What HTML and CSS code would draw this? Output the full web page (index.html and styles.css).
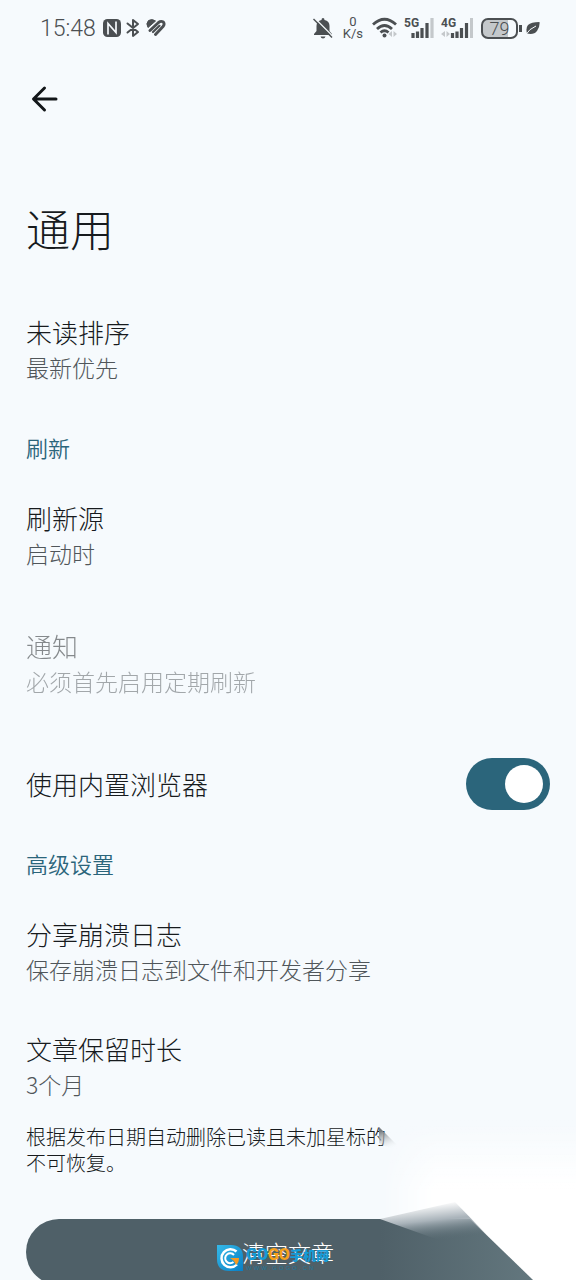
FILE: index.html
```html
<!DOCTYPE html>
<html lang="zh-CN">
<head>
<meta charset="utf-8">
<meta name="viewport" content="width=device-width, initial-scale=1">
<title>通用</title>
<link rel="stylesheet" href="styles.css">
</head>
<body>
<div class="screen">
  <header class="status">
    <div class="status-group">
      <time class="clock">15:48</time>
      <svg class="icon" width="20" height="20" viewBox="0 0 20 20" aria-hidden="true">
        <rect x="1" y="1" width="18" height="18" rx="4.500" fill="#4b4f52"/>
        <path d="M6 16.500V5.500L14 14.500V3.500" fill="none" stroke="#f6fafd" stroke-width="1.700"/>
      </svg>
      <svg class="icon" width="14" height="20" viewBox="0 0 14 20" fill="none" stroke="#4b4f52" stroke-width="2" stroke-linejoin="round" stroke-linecap="round" aria-hidden="true">
        <path d="M1.500 5.500L12 14L7 18V2L12 6L1.500 14.500"/>
      </svg>
      <svg class="icon heart" width="20" height="18" viewBox="0 0 20 18" aria-hidden="true">
        <path d="M2 8.500L9.500 2Q6 -.5 2.500 1.500Q-.5 4.500 2 8.500Z" fill="#4b4f52" stroke="#4b4f52" stroke-linejoin="round"/>
        <path d="M4 11.500L12.500 3.500Q15 1.500 17.300 3Q19 5 17 7.500L9.500 15.500" fill="none" stroke="#4b4f52" stroke-width="2.900" stroke-linecap="round"/>
        <path d="M7 13L13.500 6.800" stroke="#4b4f52" stroke-width="2.200" stroke-linecap="round"/>
      </svg>
    </div>
    <div class="status-group status-right">
      <svg class="icon" width="22" height="24" viewBox="0 0 22 24" aria-hidden="true">
        <path d="M11 2Q12.500 2 12.500 4Q17.500 5 17.500 10V15L20 18V19H2V18L4.500 15V10Q4.500 5 9.500 4Q9.500 2 11 2ZM8.500 20.500H13.500Q13 22.500 11 22.500Q9 22.500 8.500 20.500Z" fill="#4b4f52"/>
        <path d="M2.500 2L21 20.500" stroke="#f6fafd" stroke-width="1.500"/>
        <path d="M1.500 3L20 21.500" stroke="#4b4f52" stroke-width="1.500"/>
      </svg>
      <div class="speed"><span>0</span><span>K/s</span></div>
      <svg class="icon" width="25" height="22" viewBox="0 0 25 22" aria-hidden="true">
        <g fill="none" stroke="#4b4f52" stroke-width="2.800"><path d="M1 7.500Q12.500 -3 24 7.500"/><path d="M5 12Q12.500 5 20 12"/><path d="M8.500 15.500Q12.500 12 16.500 15.500"/></g>
        <circle cx="12.500" cy="18.500" r="2" fill="#4b4f52"/>
        <path d="M20 14V20L16.500 17ZM21.500 14V20L25 17Z" fill="#c4c8cb"/>
      </svg>
      <div class="signal">
        <span class="net">5G</span>
        <svg width="30" height="22" viewBox="0 0 30 22" aria-hidden="true">
          <path d="M9 21V16M13.500 21V14.500M18 21V11M23 21V6" stroke="#4b4f52" stroke-width="3.200"/>
          <path d="M28 21V1" stroke="#c4c8cb" stroke-width="3.200"/>
        </svg>
      </div>
      <div class="signal">
        <span class="net">4G</span>
        <svg width="32" height="22" viewBox="0 0 32 22" aria-hidden="true">
          <path d="M4 14V20L0 17ZM5.500 14V20L9 17Z" fill="#c4c8cb"/>
          <path d="M11.500 21V16M16 21V14.500M20.500 21V11M25.500 21V6" stroke="#4b4f52" stroke-width="3.200"/>
          <path d="M30.500 21V1" stroke="#c4c8cb" stroke-width="3"/>
        </svg>
      </div>
      <div class="battery"><span>79</span></div>
      <svg class="icon" width="14" height="14" viewBox="0 0 14 14" aria-hidden="true">
        <path d="M13.500 1Q5 1 2 4Q-.5 7 1 12.500Q8 14 11 10Q14 6 13.500 1Z" fill="#4b4f52"/>
        <path d="M0 13.500Q3 8 10 5" fill="none" stroke="#f6fafd" stroke-width="1"/>
      </svg>
    </div>
  </header>

  <button class="back" type="button" aria-label="返回">
    <svg width="28" height="28" viewBox="0 0 28 28" fill="none" stroke="#121619" stroke-width="3" stroke-linecap="round" stroke-linejoin="round" aria-hidden="true">
      <path d="M25 14H3M13.500 3L2.500 14L13.500 25"/>
    </svg>
  </button>

  <main class="content">
    <h1 class="heading">通用</h1>
    <section class="group">
      <div class="item"><h3 class="title">未读排序</h3><p class="sub">最新优先</p></div>
    </section>
    <section class="group">
      <h2 class="section">刷新</h2>
      <div class="item"><h3 class="title">刷新源</h3><p class="sub">启动时</p></div>
      <div class="item disabled"><h3 class="title">通知</h3><p class="sub">必须首先启用定期刷新</p></div>
      <div class="item row">
        <label class="title" for="browser">使用内置浏览器</label>
        <input class="switch" id="browser" type="checkbox" role="switch" checked>
      </div>
    </section>
    <section class="group advanced">
      <h2 class="section">高级设置</h2>
      <div class="item"><h3 class="title">分享崩溃日志</h3><p class="sub">保存崩溃日志到文件和开发者分享</p></div>
      <div class="item"><h3 class="title">文章保留时长</h3><p class="sub">3个月</p></div>
      <p class="note">根据发布日期自动删除已读且未加星标的<br>不可恢复。</p>
      <button class="clear" type="button">清空文章</button>
    </section>
  </main>

  <svg class="veil" width="200" height="180" viewBox="0 0 200 180" aria-hidden="true">
    <defs>
      <linearGradient id="haze" x1="0" y1="0" x2="0" y2="1"><stop offset="0" stop-color="#fff" stop-opacity="0"/><stop offset="1" stop-color="#fff"/></linearGradient>
      <linearGradient id="side" gradientUnits="userSpaceOnUse" x1="4" y1="0" x2="60" y2="0"><stop offset="0" stop-color="#000"/><stop offset="1" stop-color="#fff"/></linearGradient>
      <mask id="fade" maskUnits="userSpaceOnUse" x="0" y="0" width="200" height="180"><rect width="200" height="180" fill="url(#side)"/></mask>
      <linearGradient id="tint" x1="0" y1="0" x2="1" y2="0"><stop offset="0" stop-color="#63777e" stop-opacity="0"/><stop offset="1" stop-color="#63777e"/></linearGradient>
      <linearGradient id="edge" gradientUnits="userSpaceOnUse" x1="70" y1="102" x2="74" y2="139"><stop offset="0" stop-color="#fff"/><stop offset="0.450" stop-color="#a9b3ba"/><stop offset="1" stop-color="#5a6c74" stop-opacity="0"/></linearGradient>
      <linearGradient id="smear" x1="0" y1="0.200" x2="0.300" y2="1"><stop offset="0" stop-color="#777d82"/><stop offset="1" stop-color="#f9fcfe" stop-opacity="0"/></linearGradient>
    </defs>
    <path d="M4 119H94L157 180H4Z" fill="#4f6068"/>
    <path d="M4 119H94L157 180H4Z" fill="url(#tint)"/>
    <path d="M94 90H200V180H157L94 119Z" fill="#fff"/>
    <g mask="url(#fade)">
      <rect x="4" y="20" width="196" height="70" fill="url(#haze)"/>
      <path d="M4 90H200V119H4Z" fill="#fff"/>
    </g>
    <path d="M4 119L79 102L115 139H60Z" fill="url(#edge)"/>
    <path d="M3 27L27 51Q10 48 3 43Z" fill="url(#smear)"/>
  </svg>

  <div class="watermark">
    <svg width="26" height="26" viewBox="0 0 26 26" aria-hidden="true">
      <defs><linearGradient id="logo" x1="0" y1="0" x2="1" y2="1"><stop offset="0" stop-color="#35b9e8"/><stop offset="1" stop-color="#087fc6"/></linearGradient></defs>
      <path d="M0 0H14Q26 0 26 12V26H12Q0 26 0 14Z" fill="url(#logo)"/>
      <path d="M19.500 6.500A9 9 0 1 0 20 19.500" fill="none" stroke="#fff" stroke-width="2.500"/>
      <path d="M17 10A5 5 0 1 0 16.500 17" fill="none" stroke="#fff" stroke-width="2"/>
      <path d="M13 13H22Q22 18 19 20L17 16Z" fill="#f59a23"/>
    </svg>
    <div class="brand">
      <div class="brand-name"><span>GO</span><span class="orange">GO</span><span class="cjk">手机网</span></div>
      <div class="brand-url">WWW.GOGO.CN</div>
    </div>
  </div>
</div>
</body>
</html>
```
FILE: styles.css
```css
* { box-sizing: border-box; }
body {
  margin: 0;
  background: #f6fafd;
  color: #171b1e;
  font-family: "Noto Sans CJK SC", sans-serif;
  font-weight: 300;
}
.screen { position: relative; height: 100vh; overflow: hidden; }
h1, h2, h3, p { margin: 0; font-weight: 300; }
button { border: 0; font: inherit; }

.status {
  display: flex;
  justify-content: space-between;
  height: 56px;
  padding: 0 36px 0 40px;
  color: #4b4f52;
  font-family: Roboto, sans-serif;
}
.status-group { display: flex; align-items: center; gap: 4px; }
.status-right { gap: 7px; }
.clock { font-size: 23px; margin-right: 2px; }
.heart { margin-left: 2px; }
.speed {
  display: flex;
  flex-direction: column;
  align-items: center;
  font-size: 13px;
  line-height: 12px;
  font-weight: 400;
  margin: 0 2px;
}
.signal { position: relative; display: flex; }
.net {
  position: absolute;
  left: 0;
  top: 0;
  font-size: 12px;
  line-height: 12px;
  font-weight: 700;
}
.battery {
  position: relative;
  width: 37px;
  height: 21px;
  border: 2px solid #4b4f52;
  border-radius: 7px;
  background: linear-gradient(90deg, #c4c8cb 75%, #f6fafd 75%);
  font-size: 18px;
  line-height: 17px;
  text-align: center;
  margin: 0 1px;
}
.battery::after {
  content: "";
  position: absolute;
  right: -6px;
  top: 5px;
  width: 3px;
  height: 7px;
  background: #4b4f52;
}

.back {
  display: flex;
  margin: 29px 0 0 31px;
  padding: 0;
  background: none;
}
.content { padding: 83px 26px 0; }
.heading { font-size: 44px; line-height: 64px; margin-bottom: 54px; }
.group { margin-bottom: 47px; }
.section {
  color: #2b657b;
  font-size: 22px;
  line-height: 32px;
  font-weight: 350;
  margin-bottom: 37px;
}
.title { font-size: 26px; line-height: 36px; }
.sub { color: #50565a; font-size: 23px; line-height: 34px; }
.item + .item { margin-top: 58px; }
.item + .row { margin-top: 60px; }
.advanced { margin-top: -10px; }
.advanced .item + .item { margin-top: 45px; }
.disabled { opacity: 0.5; }
.row { display: flex; align-items: center; justify-content: space-between; }
.switch {
  appearance: none;
  width: 84px;
  height: 52px;
  margin: 0;
  padding: 7px;
  border-radius: 26px;
  background: #2b657b;
}
.switch::before {
  content: "";
  display: block;
  width: 38px;
  height: 38px;
  margin-left: auto;
  border-radius: 50%;
  background: #fff;
}
.note { font-size: 20px; line-height: 26px; margin: 23px 0 43px; }
.clear {
  display: block;
  width: 100%;
  height: 66px;
  border-radius: 33px;
  background: #4f6068;
  color: #fff;
  font-size: 23px;
}

.veil { position: absolute; right: 0; bottom: 0; }
.watermark {
  position: absolute;
  left: 217px;
  bottom: 9px;
  display: flex;
  gap: 3px;
}
.brand-name {
  display: flex;
  align-items: center;
  color: #159bd7;
  font-family: Roboto, sans-serif;
  font-size: 16px;
  line-height: 20px;
  font-weight: 900;
}
.orange { color: #f6a11c; }
.cjk { font-family: "Noto Sans CJK SC", sans-serif; font-size: 13px; }
.brand-url {
  color: #21779b;
  font-family: "Liberation Sans", sans-serif;
  font-size: 6px;
  line-height: 6px;
  letter-spacing: 2px;
}
```
